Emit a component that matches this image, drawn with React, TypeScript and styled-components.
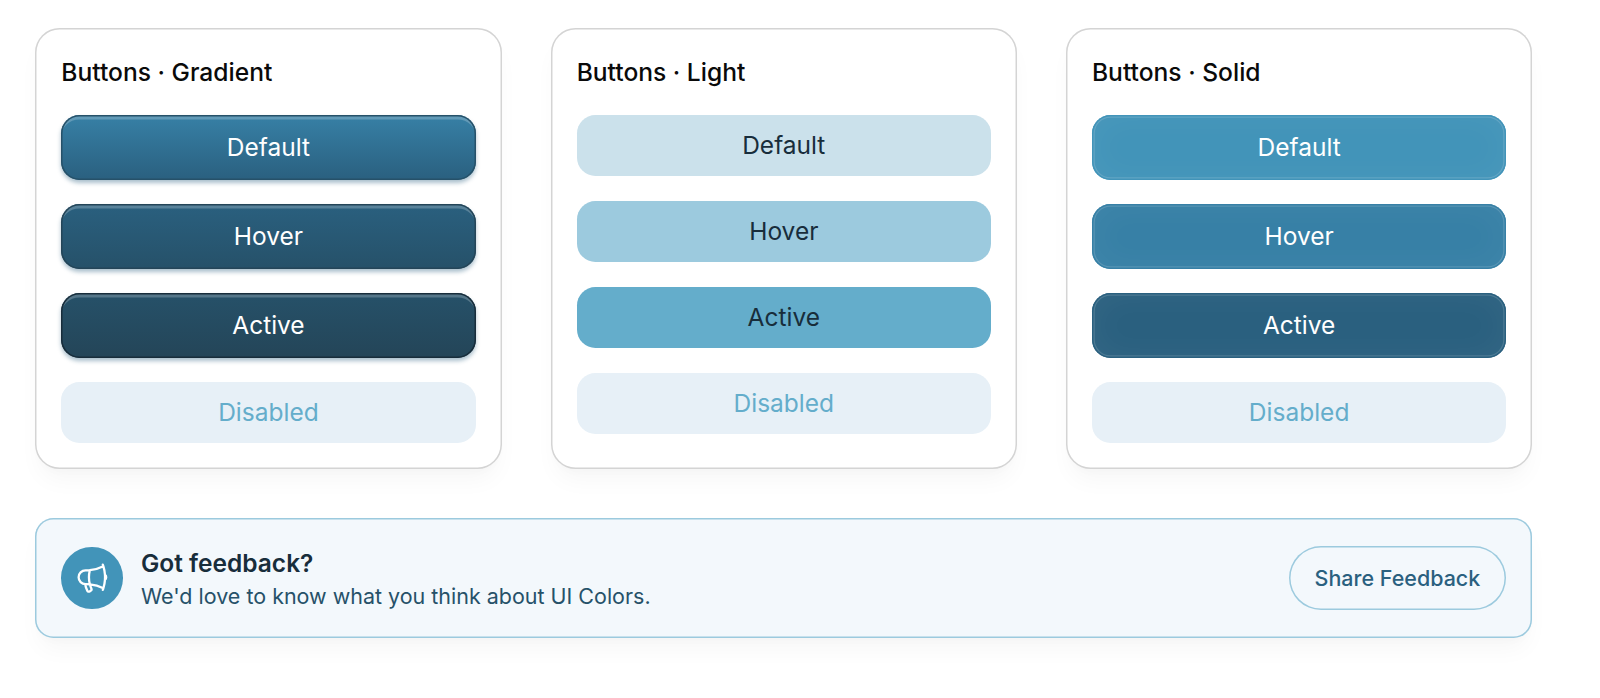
import React from "react";
import styled, { createGlobalStyle, css } from "styled-components";

const palette = {
  50: "#f3f8fc",
  100: "#e7f0f7",
  200: "#cbe1eb",
  300: "#9ccade",
  400: "#64adcb",
  500: "#4294b9",
  600: "#3780a6",
  700: "#2a607f",
  800: "#265169",
  900: "#244558",
  950: "#182d3b",
};

const GlobalStyle = createGlobalStyle`
  *, *::before, *::after { box-sizing: border-box; }
  html { background: #fff; overflow: hidden; }
  body {
    margin: 0;
    font-family: Inter, "Liberation Sans", sans-serif;
    -webkit-font-smoothing: antialiased;
  }
  button { font: inherit; }
`;

const Page = styled.main`
  width: 1532.3px;
  height: 698px;
  padding: 28px 0 0 35.3px;
  display: flex;
  flex-direction: column;
  gap: 49px;
`;

const Cards = styled.section`
  display: grid;
  grid-template-columns: repeat(3, 1fr);
  gap: 49px;
  height: 441.4px;
`;

const softShadow = "0 15px 23px -4px rgba(0,0,0,0.035), 0 6px 9px -3px rgba(0,0,0,0.015)";

const Card = styled.article`
  border-radius: 24.5px;
  padding: 26px;
  background: #fff;
  box-shadow: inset 0 0 0 1.5px #d4d4d4, ${softShadow};
`;

const CardTitle = styled.h2`
  margin: 0 0 24.5px;
  font-size: 24.6px;
  line-height: 36.8px;
  font-weight: 500;
  color: #0a0a0a;
`;

const ButtonStack = styled.div`
  display: flex;
  flex-direction: column;
  gap: 24.7px;
`;

type Kind = "gradient" | "solid" | "flat";

const DemoButton = styled.button<{ $kind: Kind; $from: string; $to?: string; $edge?: string; $color: string }>`
  border: 0;
  padding: 0;
  width: 100%;
  height: ${(p) => (p.$kind === "flat" ? 61.2 : 64.3)}px;
  border-radius: 18.4px;
  font-size: 24.5px;
  line-height: 36.8px;
  font-weight: 400;
  color: ${(p) => p.$color};
  background: ${(p) => p.$from};
  ${(p) =>
    p.$kind === "gradient" &&
    css`
      background: linear-gradient(${p.$from}, ${p.$to});
      box-shadow: inset 0 0 0 1.5px ${p.$edge}, inset 0 4.6px 0 -0.2px rgba(255, 255, 255, 0.22),
        0 3px 4.6px rgba(42, 96, 127, 0.4);
    `}
  ${(p) =>
    p.$kind === "solid" &&
    css`
      box-shadow: inset 0 0 0 1.5px ${p.$edge}, inset 0 0 0 2.8px rgba(255, 255, 255, 0.14),
        inset 0 0 37px rgba(255, 255, 255, 0.05);
    `}
`;

const Banner = styled.section`
  display: flex;
  align-items: center;
  height: 119.5px;
  padding: 0 26px;
  border-radius: 18.4px;
  background: ${palette[50]};
  box-shadow: inset 0 0 0 1.5px ${palette[300]}, ${softShadow};
`;

const IconDisc = styled.div`
  display: flex;
  align-items: center;
  justify-content: center;
  width: 61.3px;
  height: 61.3px;
  border-radius: 50%;
  color: #fff;
  background: ${palette[500]};
`;

const BannerText = styled.div`
  flex: 1;
  padding-top: 0.6px;
  margin-left: 18.4px;
`;

const BannerTitle = styled.h3`
  margin: 0;
  font-size: 24.5px;
  line-height: 36.8px;
  font-weight: 600;
  color: ${palette[950]};
`;

const BannerCopy = styled.p`
  margin: 0;
  font-size: 21.47px;
  line-height: 30.7px;
  color: ${palette[800]};
`;

const ShareButton = styled.button`
  border: 0;
  width: 217.8px;
  height: 64.4px;
  padding: 0;
  border-radius: 33px;
  background: transparent;
  box-shadow: inset 0 0 0 1.5px ${palette[300]};
  font-size: 21.47px;
  font-weight: 500;
  color: ${palette[700]};
`;

const Megaphone = () => (
  <svg width="36.8" height="36.8" viewBox="0 0 24 24" fill="none" stroke="currentColor" strokeWidth="1.5" strokeLinecap="round" strokeLinejoin="round">
    <path d="M10.34 15.84c-.688-.06-1.386-.09-2.09-.09H7.5a4.5 4.5 0 1 1 0-9h.75c.704 0 1.402-.03 2.09-.09m0 9.18c.253.962.584 1.892.985 2.783.247.55.06 1.21-.463 1.511l-.657.38c-.551.318-1.26.117-1.527-.461a20.845 20.845 0 0 1-1.44-4.282m3.102.069a18.03 18.03 0 0 1-.59-4.59c0-1.586.205-3.124.59-4.59m0 9.18a23.848 23.848 0 0 1 8.835 2.535M10.34 6.66a23.847 23.847 0 0 0 8.835-2.535m0 0A23.74 23.74 0 0 0 18.795 3m.38 1.125a23.91 23.91 0 0 1 1.014 5.395m-1.014 8.855c-.118.38-.245.754-.38 1.125m.38-1.125a23.91 23.91 0 0 0 1.014-5.395m0-3.46c.495.413.811 1.035.811 1.73 0 .695-.316 1.317-.811 1.73m0-3.46a24.347 24.347 0 0 1 0 3.46" />
  </svg>
);

interface ButtonSpec {
  label: string;
  from: string;
  to?: string;
  edge?: string;
  color: string;
}

const groups: { name: string; kind: Kind; buttons: ButtonSpec[] }[] = [
  {
    name: "Gradient",
    kind: "gradient",
    buttons: [
      { label: "Default", from: palette[600], to: palette[700], edge: palette[800], color: "#fff" },
      { label: "Hover", from: palette[700], to: palette[800], edge: palette[900], color: "#fff" },
      { label: "Active", from: palette[800], to: palette[900], edge: palette[950], color: "#fff" },
    ],
  },
  {
    name: "Light",
    kind: "flat",
    buttons: [
      { label: "Default", from: palette[200], color: palette[950] },
      { label: "Hover", from: palette[300], color: palette[950] },
      { label: "Active", from: palette[400], color: palette[950] },
    ],
  },
  {
    name: "Solid",
    kind: "solid",
    buttons: [
      { label: "Default", from: palette[500], edge: palette[500], color: "#fff" },
      { label: "Hover", from: palette[600], edge: palette[600], color: "#fff" },
      { label: "Active", from: palette[700], edge: palette[700], color: "#fff" },
    ],
  },
];

export default function App() {
  return (
    <>
      <GlobalStyle />
      <Page>
        <Cards>
          {groups.map((g) => (
            <Card key={g.name}>
              <CardTitle>Buttons · {g.name}</CardTitle>
              <ButtonStack>
                {g.buttons.map((b) => (
                  <DemoButton key={b.label} $kind={g.kind} $from={b.from} $to={b.to} $edge={b.edge} $color={b.color}>
                    {b.label}
                  </DemoButton>
                ))}
                <DemoButton $kind="flat" $from={palette[100]} $color={palette[400]}>
                  Disabled
                </DemoButton>
              </ButtonStack>
            </Card>
          ))}
        </Cards>
        <Banner>
          <IconDisc>
            <Megaphone />
          </IconDisc>
          <BannerText>
            <BannerTitle>Got feedback?</BannerTitle>
            <BannerCopy>We'd love to know what you think about UI Colors.</BannerCopy>
          </BannerText>
          <ShareButton>Share Feedback</ShareButton>
        </Banner>
      </Page>
    </>
  );
}
